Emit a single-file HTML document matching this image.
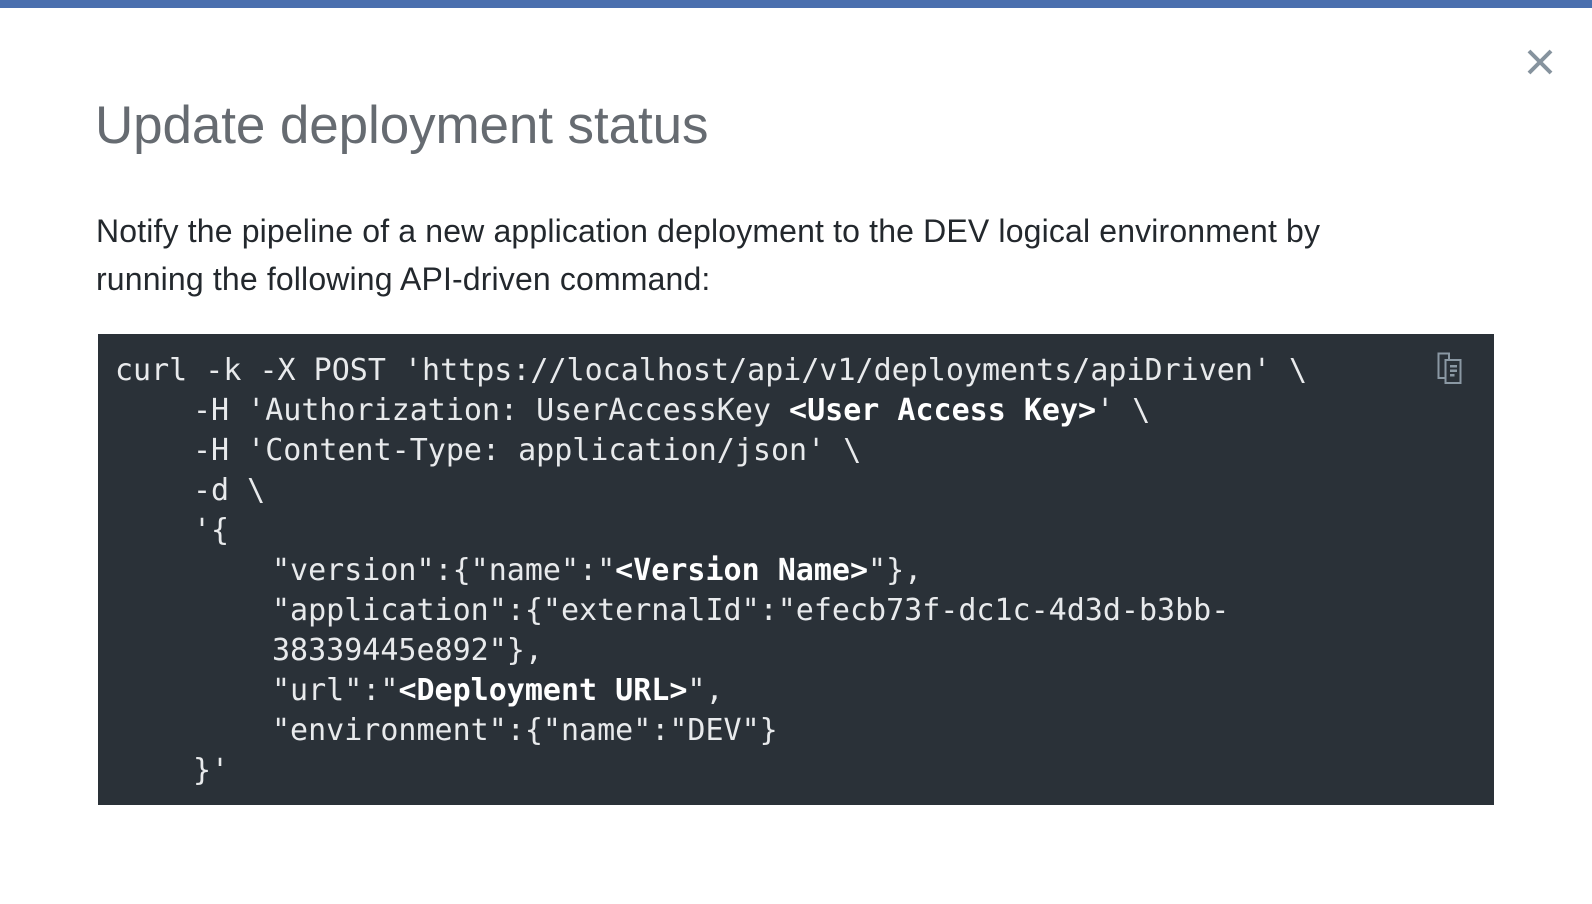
<!DOCTYPE html>
<html><head><meta charset="utf-8"><style>
html,body{margin:0;padding:0;width:1592px;height:904px;background:#fff;overflow:hidden}
.bar{position:absolute;left:0;top:0;width:1592px;height:8px;background:#4a6fae}
.x{position:absolute;left:1527px;top:49px}
h1{position:absolute;left:95px;top:94px;margin:0;font:300 53px/64px "Liberation Sans",sans-serif;color:#666b71;letter-spacing:-0.1px}
p{position:absolute;left:96px;top:207px;margin:0;width:1270px;font:400 32px/48px "Liberation Sans",sans-serif;color:#23282d;letter-spacing:0.15px}
.code{position:absolute;left:98px;top:334px;width:1396px;height:471px;background:#2a3138}
.pre{position:absolute;left:17px;top:17px;margin:0;font:30px/40px "DejaVu Sans Mono",monospace;color:#e8eaec;white-space:pre}
.l1{padding-left:78px}.l2{padding-left:157px}
b{font-weight:bold;color:#fff}
.cp{position:absolute;left:1339px;top:18px}
</style></head><body>
<div class="bar"></div>
<svg class="x" width="26" height="26" viewBox="0 0 26 26"><path d="M2 2L24 24M24 2L2 24" stroke="#86939e" stroke-width="4"/></svg>
<h1>Update deployment status</h1>
<p>Notify the pipeline of a new application deployment to the DEV logical environment by running the following API-driven command:</p>
<div class="code">
<div class="pre"><div>curl -k -X POST 'https://localhost/api/v1/deployments/apiDriven' \</div><div class="l1">-H 'Authorization: UserAccessKey <b>&lt;User Access Key&gt;</b>' \</div><div class="l1">-H 'Content-Type: application/json' \</div><div class="l1">-d \</div><div class="l1">'{</div><div class="l2">"version":{"name":"<b>&lt;Version Name&gt;</b>"},</div><div class="l2">"application":{"externalId":"efecb73f-dc1c-4d3d-b3bb-</div><div class="l2">38339445e892"},</div><div class="l2">"url":"<b>&lt;Deployment URL&gt;</b>",</div><div class="l2">"environment":{"name":"DEV"}</div><div class="l1">}'</div></div>
<svg class="cp" width="26" height="34" viewBox="0 0 26 34"><path d="M1.5 1.5H12V8H8.5V26H1.5Z" fill="none" stroke="#8a98a3" stroke-width="2"/><rect x="8.5" y="8" width="15" height="23" fill="none" stroke="#8a98a3" stroke-width="2"/><rect x="13" y="13" width="7" height="2.5" fill="#8a98a3"/><rect x="13" y="17.5" width="7" height="2.5" fill="#8a98a3"/><rect x="13" y="22" width="4.5" height="2.5" fill="#8a98a3"/></svg>
</div>
</body></html>
